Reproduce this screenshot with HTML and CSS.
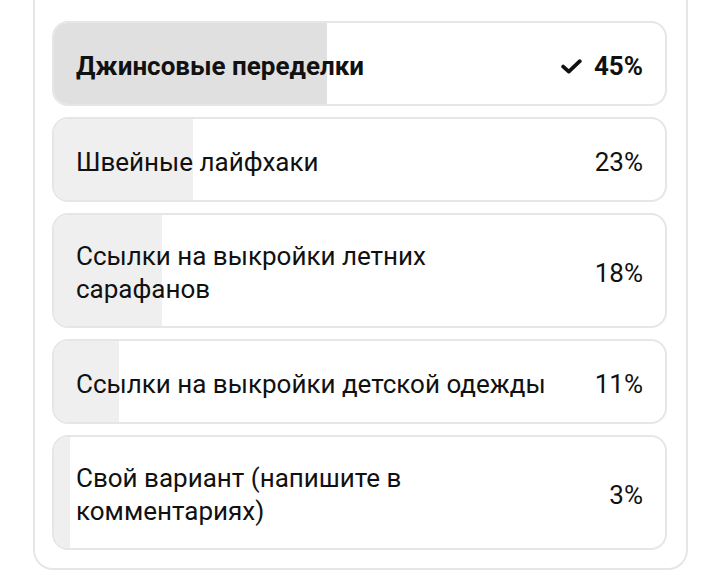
FILE: index.html
```html
<!DOCTYPE html>
<html>
  <head>
    <title>Опрос</title>
    <link rel="stylesheet" href="styles.css">
  </head>
  <body>
    <div class="poll">
      <div class="option voted">
        <div class="fill" style="width: 45%"></div>
        <span class="label">Джинсовые переделки</span>
        <span class="result">
          <svg class="check" width="21" height="15" viewBox="0 0 21 15">
            <path d="M2.2 7.6 L7.8 12.6 L18.8 2.2" fill="none" stroke="#111" stroke-width="3.8" stroke-linecap="round" stroke-linejoin="round"/>
          </svg>
          45%
        </span>
      </div>

      <div class="option">
        <div class="fill" style="width: 23%"></div>
        <span class="label">Швейные лайфхаки</span>
        <span class="result">23%</span>
      </div>

      <div class="option">
        <div class="fill" style="width: 18%"></div>
        <span class="label">Ссылки на выкройки летних сарафанов</span>
        <span class="result">18%</span>
      </div>

      <div class="option">
        <div class="fill" style="width: 11%"></div>
        <span class="label">Ссылки на выкройки детской одежды</span>
        <span class="result">11%</span>
      </div>

      <div class="option">
        <div class="fill" style="width: 3%"></div>
        <span class="label">Свой вариант (напишите в комментариях)</span>
        <span class="result">3%</span>
      </div>
    </div>
  </body>
</html>
```

FILE: styles.css
```css
:root {
  --text: #111111;
  --border: #e6e6e6;
  --fill: #efefef;
  --fill-voted: #e0e0e0;
}

html,
body {
  margin: 0;
  padding: 0;
  background: #ffffff;
}

body {
  font-family: Roboto, "Noto Sans", sans-serif;
  color: var(--text);
  padding: 0 31px 0 33px;
}

.poll {
  display: flex;
  flex-direction: column;
  gap: 11px;
  border: 2px solid var(--border);
  border-top: none;
  border-radius: 0 0 20px 20px;
  padding: 21px 19px 18px 17px;
}

.option {
  position: relative;
  display: flex;
  align-items: center;
  gap: 16px;
  min-height: 85px;
  box-sizing: border-box;
  padding: 25px 22px 20px;
  border: 2px solid var(--border);
  border-radius: 16px;
  overflow: hidden;
  font-size: 26px;
  line-height: 33px;
}

.fill {
  position: absolute;
  top: -2px;
  bottom: -2px;
  left: -2px;
  background: var(--fill);
}

.voted .fill {
  background: var(--fill-voted);
}

.label,
.result {
  position: relative;
}

.label {
  flex: 1;
}

.result {
  display: flex;
  align-items: center;
  justify-content: flex-end;
  gap: 12px;
  min-width: 72px;
  white-space: nowrap;
}

.voted .label,
.voted .result {
  font-weight: 700;
}
```
